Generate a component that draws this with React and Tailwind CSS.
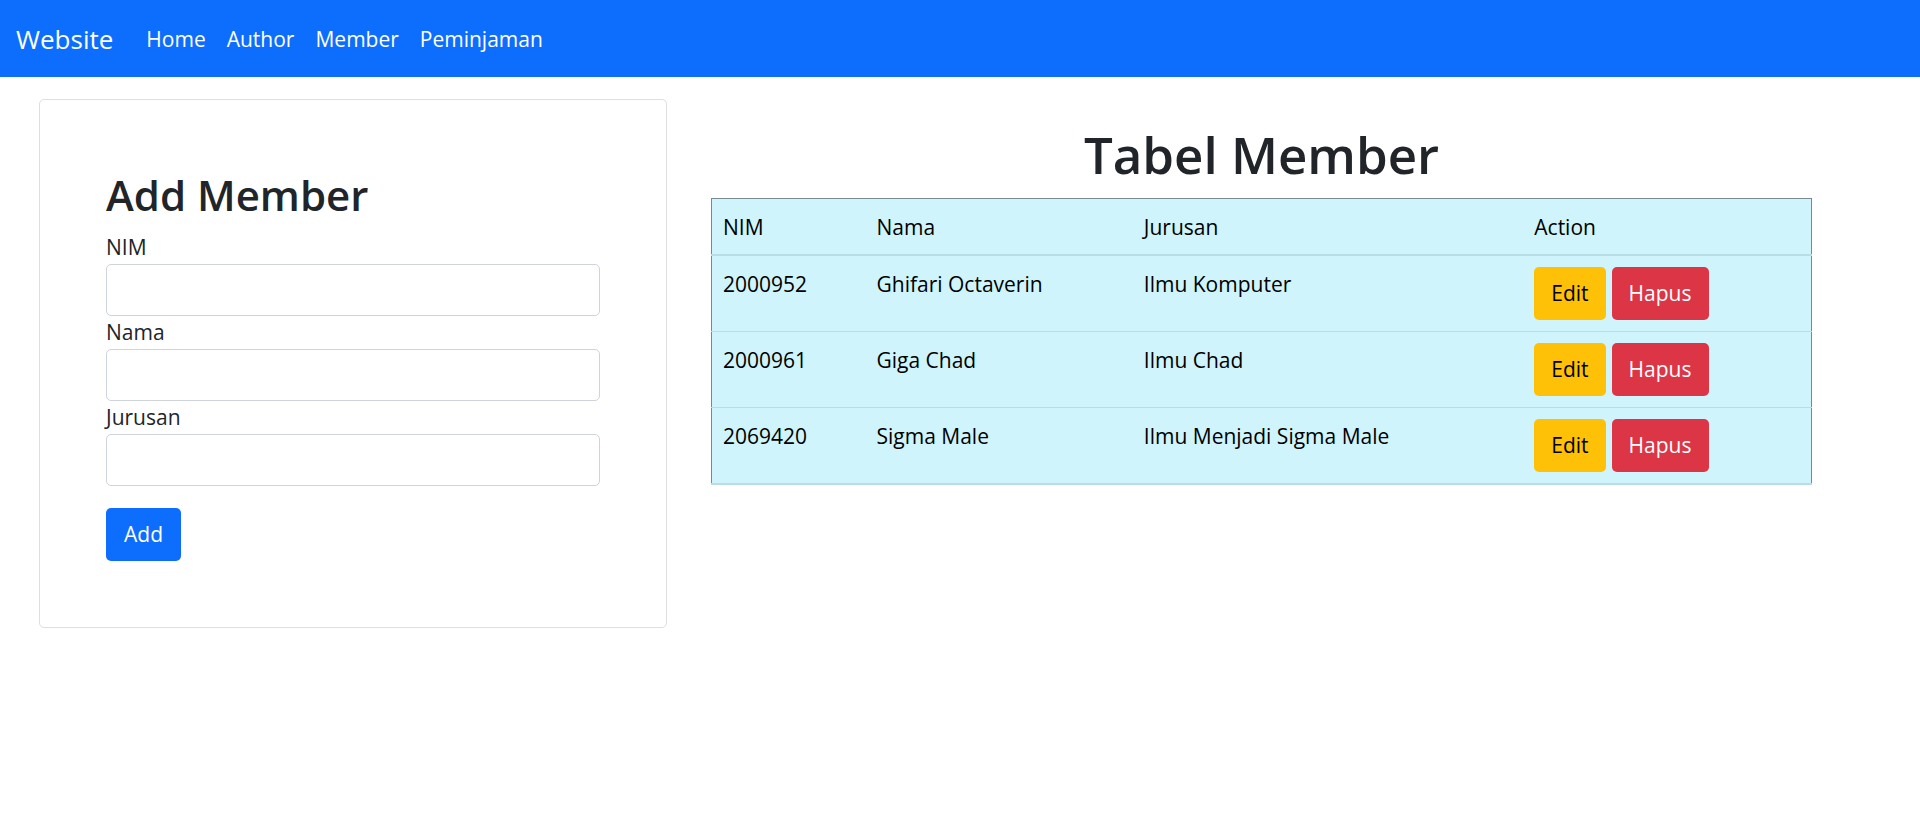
import React from "react";

const links = ["Home", "Author", "Member", "Peminjaman"];

const fields = [
  { id: "nim", label: "NIM" },
  { id: "nama", label: "Nama" },
  { id: "jurusan", label: "Jurusan" },
];

const members = [
  { nim: "2000952", nama: "Ghifari Octaverin", jurusan: "Ilmu Komputer" },
  { nim: "2000961", nama: "Giga Chad", jurusan: "Ilmu Chad" },
  { nim: "2069420", nama: "Sigma Male", jurusan: "Ilmu Menjadi Sigma Male" },
];

function Navbar() {
  return (
    <nav className="flex h-[77px] items-center bg-[#0d6efd] px-4 pt-[2px] text-white">
      <a href="#" className="mr-[33px] text-[26px]">
        Website
      </a>
      <ul className="flex gap-[21px]">
        {links.map((link) => (
          <li key={link}>
            <a href="#">{link}</a>
          </li>
        ))}
      </ul>
    </nav>
  );
}

function MemberForm() {
  return (
    <form
      className="rounded-[5px] border border-[#dfdfdf] px-[66px] pt-[68px] pb-[66px]"
      onSubmit={(e) => e.preventDefault()}
    >
      <h2 className="mb-[10px] text-[42px] leading-[53px] font-semibold">
        Add Member
      </h2>
      {fields.map((field) => (
        <div key={field.id}>
          <label htmlFor={field.id} className="block">
            {field.label}
          </label>
          <input
            id={field.id}
            name={field.id}
            type="text"
            className="block h-[52px] w-full rounded-[5px] border border-[#ced4da] bg-white px-4"
          />
        </div>
      ))}
      <button
        type="submit"
        className="mt-[22px] block h-[53px] rounded-[5px] bg-[#0d6efd] px-[18px] text-white"
      >
        Add
      </button>
    </form>
  );
}

function MemberTable() {
  return (
    <section className="pt-[22px]">
      <h1 className="mb-[11px] text-center text-[51px] leading-[66px] font-semibold">
        Tabel Member
      </h1>
      <table className="w-full table-fixed border-collapse border border-b-2 border-[#768a8f] border-b-[#badce3] bg-[#cff4fc] text-left text-black">
        <colgroup>
          <col className="w-[14%]" />
          <col className="w-[24.3%]" />
          <col className="w-[35.5%]" />
          <col />
        </colgroup>
        <thead>
          <tr className="border-b-2 border-[#badce3]">
            {["NIM", "Nama", "Jurusan", "Action"].map((heading) => (
              <th key={heading} className="px-[11px] pt-3 pb-[10px] font-normal">
                {heading}
              </th>
            ))}
          </tr>
        </thead>
        <tbody>
          {members.map((member) => (
            <tr
              key={member.nim}
              className="border-b border-[#badce3] align-top last:border-b-2"
            >
              <td className="px-[11px] pt-3">{member.nim}</td>
              <td className="px-[11px] pt-3">{member.nama}</td>
              <td className="px-[11px] pt-3">{member.jurusan}</td>
              <td className="p-[11px]">
                <div className="flex gap-[6px]">
                  <button
                    type="button"
                    className="h-[53px] rounded-[5px] bg-[#ffc107] px-[17px] text-black"
                  >
                    Edit
                  </button>
                  <button
                    type="button"
                    className="h-[53px] rounded-[5px] bg-[#dc3545] px-[17px] text-white"
                  >
                    Hapus
                  </button>
                </div>
              </td>
            </tr>
          ))}
        </tbody>
      </table>
    </section>
  );
}

export default function App() {
  return (
    <div className="min-h-screen bg-white font-['Open_Sans','Noto_Sans',sans-serif] text-[21px] leading-[33px] text-[#212529]">
      <Navbar />
      <main className="grid grid-cols-[628fr_1101fr] items-start gap-[44px] pt-[22px] pr-[108px] pl-[39px]">
        <MemberForm />
        <MemberTable />
      </main>
    </div>
  );
}
